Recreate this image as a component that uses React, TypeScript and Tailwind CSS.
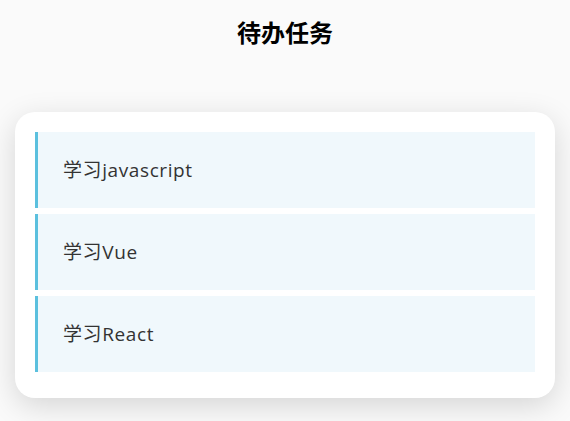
import React from "react";

const todos = ["学习javascript", "学习Vue", "学习React"];

export default function App() {
  return (
    <div
      className="min-h-screen bg-[#fafafa] pt-[17px]"
      style={{ fontFamily: '"Open Sans", "Noto Sans CJK SC", sans-serif' }}
    >
      <h1 className="text-center text-[24px] leading-[32px] font-bold text-black">待办任务</h1>
      <div className="mx-[15px] mt-[63px] rounded-[20px] bg-white px-[20px] pt-[20px] pb-[20px] shadow-[0_8px_30px_rgba(0,0,0,0.15)]">
        {todos.map((t) => (
          <div
            key={t}
            className="mb-[6px] flex h-[76px] items-center border-l-[3px] border-[#5bc0de] bg-[#f0f8fc] pl-[25px] text-[19px] tracking-[0.6px] text-[#333]"
          >
            {t}
          </div>
        ))}
      </div>
    </div>
  );
}
